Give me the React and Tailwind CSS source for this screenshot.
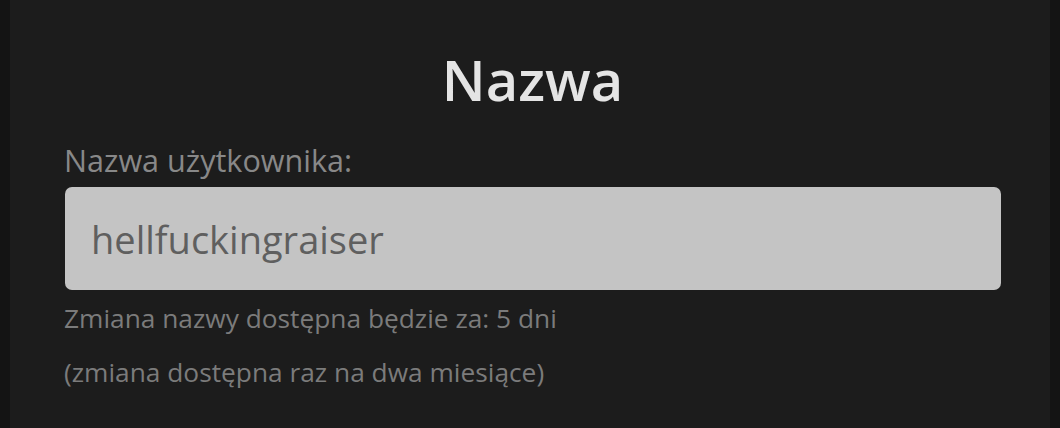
import React from "react";

const App = () => {
  return (
    <div
      className="w-full h-[428px] bg-[#141414] grid grid-cols-[10px_1fr_10px]"
      style={{ fontFamily: '"Open Sans", "Noto Sans", sans-serif' }}
    >
      <div className="bg-[#141414]" />
      <div className="bg-[#1c1c1c] flex flex-col pl-[54px] pr-[49px] min-w-0">
        <h1 className="text-center text-[56px] leading-[56px] font-semibold text-[#e4e4e4] mt-[51px]">
          Nazwa
        </h1>
        <label className="mt-[38px] text-[30.6px] leading-[30px] text-[#888888]">
          Nazwa użytkownika:
        </label>
        <div className="mt-[12px] ml-[1px] h-[103px] shrink-0 rounded-[7px] bg-[#c4c4c4] flex items-center px-[26px]">
          <span className="text-[38px] leading-[38px] text-[#5f5f5f]">
            hellfuckingraiser
          </span>
        </div>
        <p className="mt-[15px] text-[26.3px] leading-[26px] text-[#7b7b7b]">
          Zmiana nazwy dostępna będzie za: 5 dni
        </p>
        <p className="mt-[28px] text-[26.3px] leading-[26px] text-[#7b7b7b]">
          (zmiana dostępna raz na dwa miesiące)
        </p>
      </div>
      <div className="bg-[#141414]" />
    </div>
  );
};

export default App;
